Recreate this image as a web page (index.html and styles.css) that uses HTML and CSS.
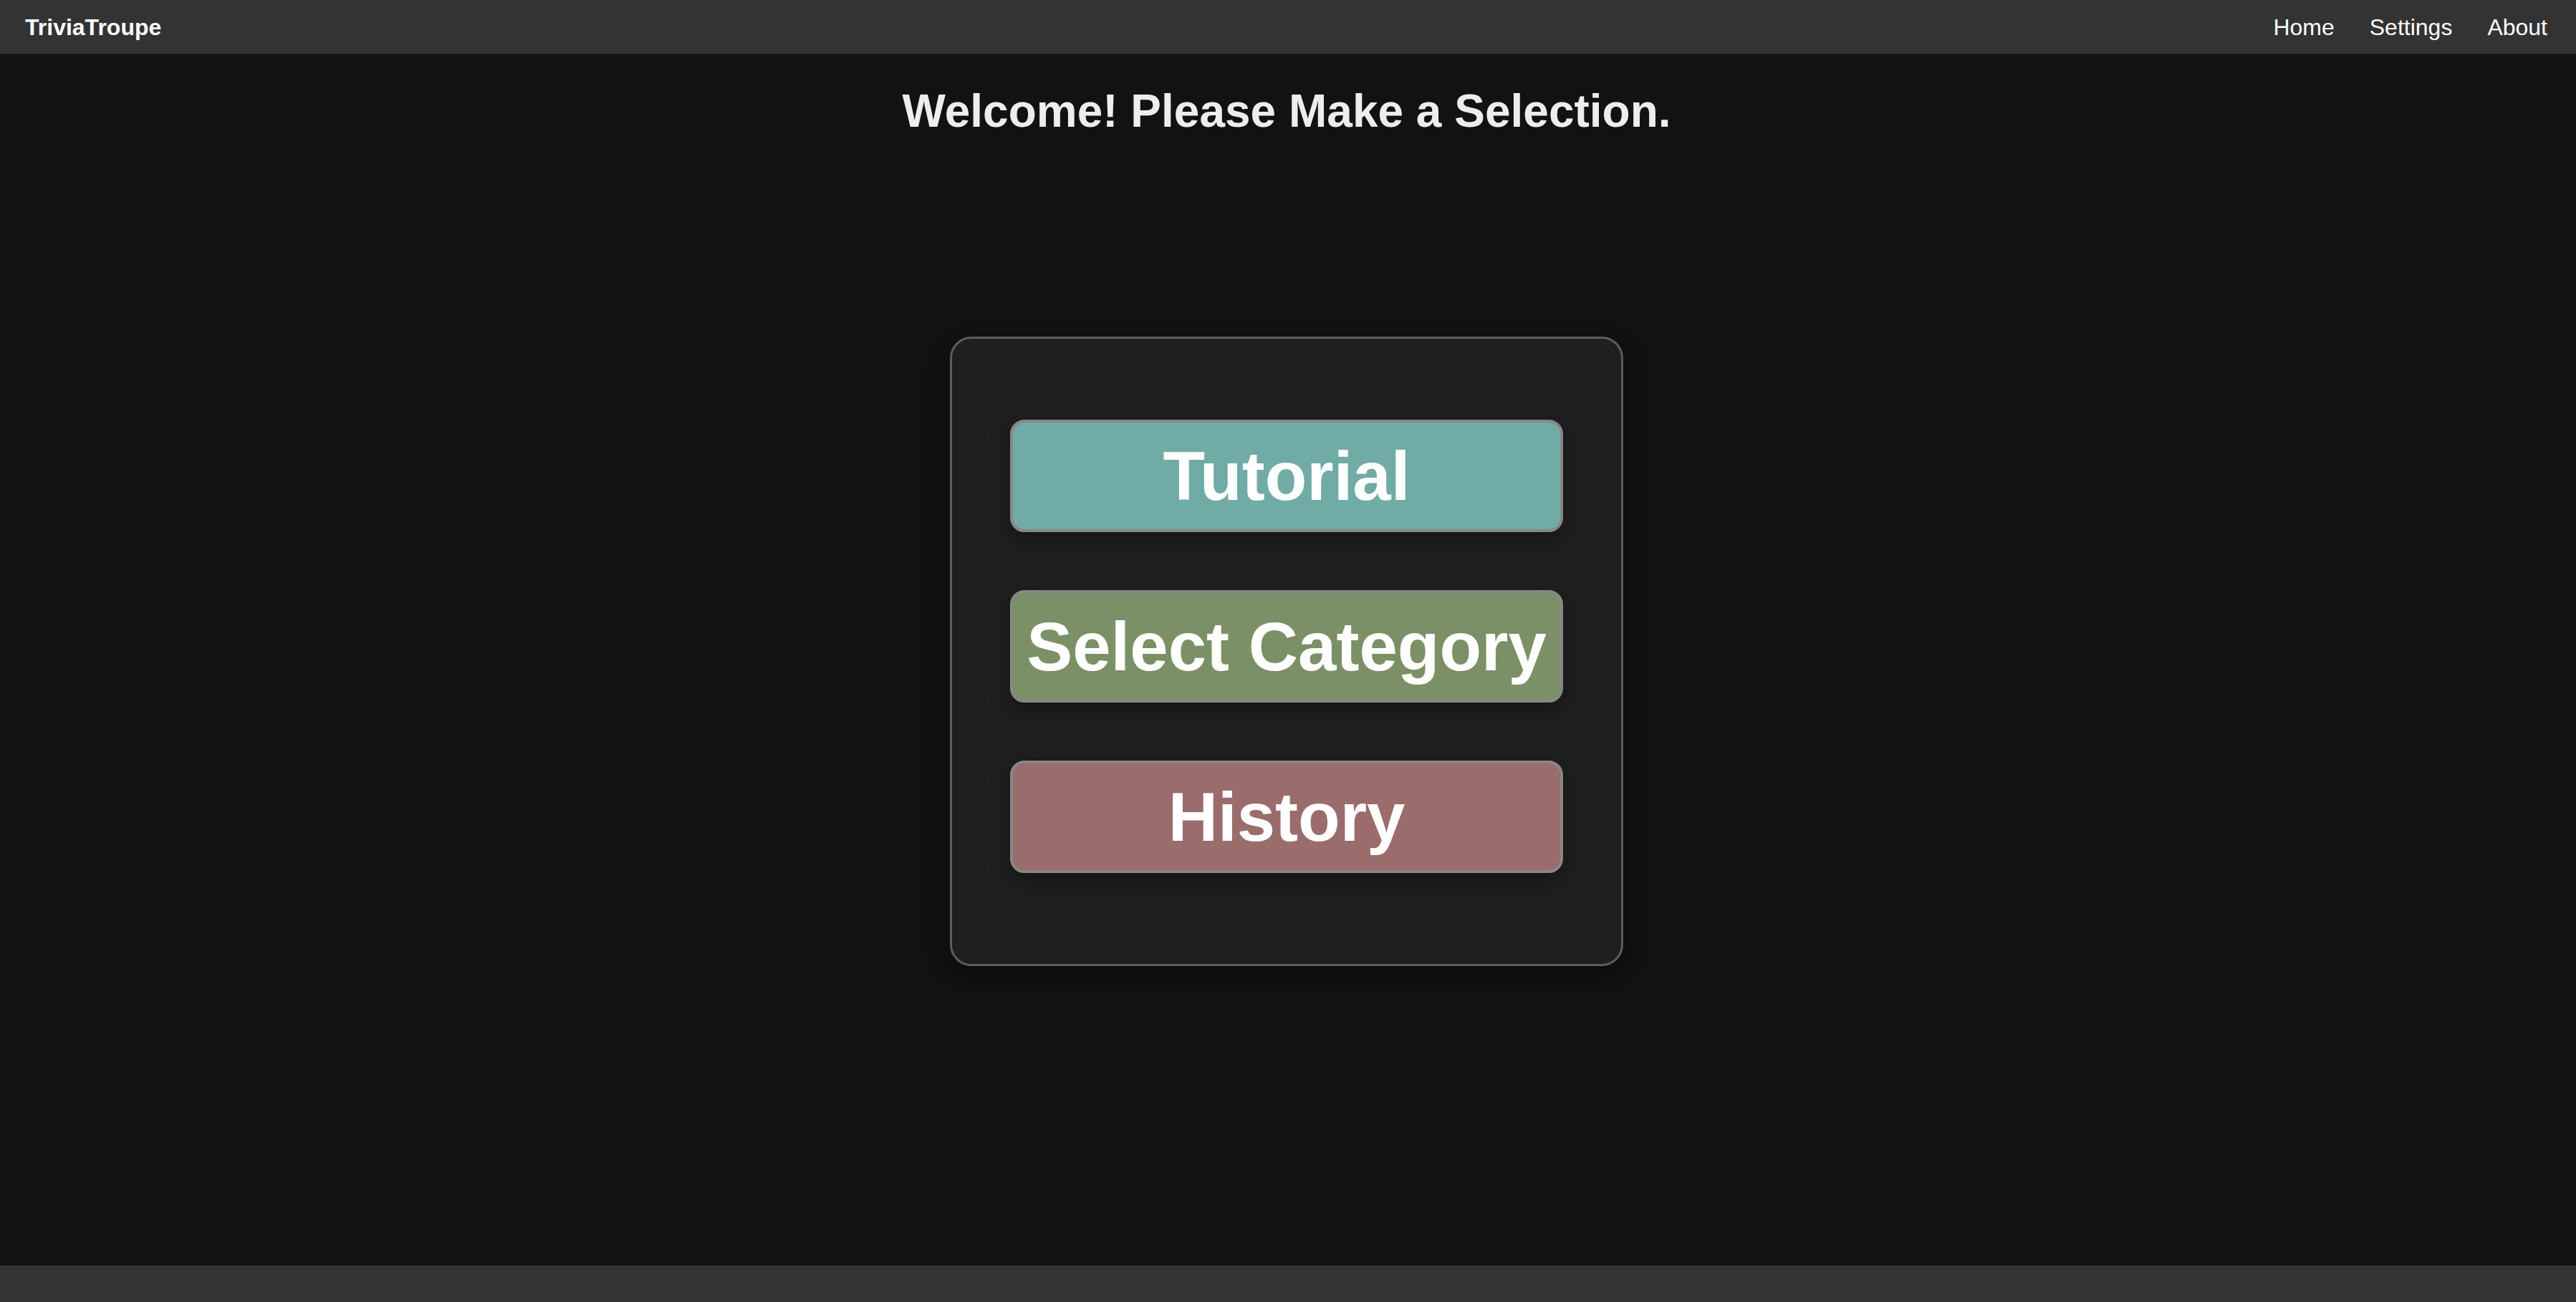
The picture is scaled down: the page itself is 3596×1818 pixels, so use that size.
FILE: index.html
```html
<!DOCTYPE html>
<html lang="en">
<head>
<meta charset="utf-8">
<title>TriviaTroupe</title>
<link rel="stylesheet" href="styles.css">
</head>
<body>
<header class="topbar">
  <a class="brand" href="#">TriviaTroupe</a>
  <nav class="nav">
    <a class="nav-link" href="#">Home</a>
    <a class="nav-link" href="#">Settings</a>
    <a class="nav-link" href="#">About</a>
  </nav>
</header>
<main class="main">
  <h1 class="title">Welcome! Please Make a Selection.</h1>
  <section class="card">
    <button class="choice choice-tutorial">Tutorial</button>
    <button class="choice choice-category">Select Category</button>
    <button class="choice choice-history">History</button>
  </section>
</main>
<footer class="footer"></footer>
</body>
</html>
```
FILE: styles.css
```css
* { box-sizing: border-box; }

html, body {
  margin: 0;
  padding: 0;
  height: 100%;
}

body {
  background: #121212;
  color: #efecec;
  font-family: "Liberation Sans", Arial, Helvetica, sans-serif;
  display: flex;
  flex-direction: column;
  min-height: 100vh;
  overflow: hidden;
}

.topbar {
  height: 75px;
  flex: 0 0 75px;
  background: #333333;
  display: flex;
  align-items: center;
  justify-content: space-between;
  padding: 0 40px 0 35px;
}

.brand {
  color: #ffffff;
  font-weight: 700;
  font-size: 32px;
  text-decoration: none;
  line-height: 1;
}

.nav {
  display: flex;
  gap: 49px;
}

.nav-link {
  color: #ffffff;
  font-size: 32px;
  text-decoration: none;
  line-height: 1;
}

.main {
  flex: 1;
  display: flex;
  flex-direction: column;
  align-items: center;
  padding-right: 4px;
}

.title {
  margin: 43px 0 0;
  font-size: 64px;
  line-height: 74px;
  font-weight: 700;
  color: #efecec;
  text-align: center;
}

.card {
  margin-top: 278px;
  width: 940px;
  background: #1f1f1f;
  border: 3px solid #5c5c5c;
  border-radius: 30px;
  padding: 113px 81px 127px;
  display: flex;
  flex-direction: column;
  gap: 81px;
  box-shadow: 0 10px 30px rgba(0, 0, 0, 0.45);
}

.choice {
  display: flex;
  align-items: center;
  justify-content: center;
  width: 100%;
  height: 157px;
  border: 4px solid #878787;
  border-radius: 20px;
  color: #ffffff;
  font-family: "Liberation Sans", Arial, Helvetica, sans-serif;
  font-weight: 700;
  font-size: 96px;
  line-height: 1;
  padding: 0;
  cursor: pointer;
  box-shadow: 0 10px 28px rgba(0, 0, 0, 0.35);
}

.choice-tutorial { background: #70aba5; }
.choice-category { background: #7b9066; }
.choice-history { background: #9a6c6c; }

.footer {
  height: 51px;
  flex: 0 0 51px;
  background: #333333;
}
```
